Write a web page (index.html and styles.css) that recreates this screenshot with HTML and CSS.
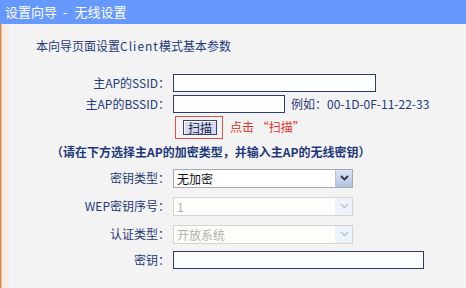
FILE: index.html
```html
<!DOCTYPE html>
<html lang="zh">
<head>
<meta charset="utf-8">
<link rel="stylesheet" href="styles.css">
</head>
<body>
<div class="title">设置向导<span class="dash">-</span>无线设置</div>
<div class="panel">
  <p class="intro">本向导页面设置<span class="latin">Client</span>模式基本参数</p>
  <div class="form">
    <div class="label">主AP的SSID：</div>
    <div class="field"><input class="text wide" type="text"></div>

    <div class="label">主AP的BSSID：</div>
    <div class="field"><input class="text mid" type="text"><span class="hint">例如：00-1D-0F-11-22-33</span></div>

    <div class="label"></div>
    <div class="field">
      <div class="scanbox"><button class="btn" type="button">扫描</button></div>
      <span class="red">点击 “扫描”</span>
    </div>

    <div class="note">（请在下方选择主AP的加密类型，并输入主AP的无线密钥）</div>

    <div class="label">密钥类型：</div>
    <div class="field">
      <div class="select"><span class="val">无加密</span><span class="arrow"><svg width="9" height="6" viewBox="0 0 9 6"><path d="M1 1 L4.5 4.5 L8 1" fill="none" stroke="#2c3550" stroke-width="1.8"/></svg></span></div>
    </div>

    <div class="label">WEP密钥序号：</div>
    <div class="field">
      <div class="select disabled"><span class="val">1</span><span class="arrow"><svg width="9" height="6" viewBox="0 0 9 6"><path d="M1 1 L4.5 4.5 L8 1" fill="none" stroke="#b9c6d8" stroke-width="1.6"/></svg></span></div>
    </div>

    <div class="label">认证类型：</div>
    <div class="field">
      <div class="select disabled"><span class="val">开放系统</span><span class="arrow"><svg width="9" height="6" viewBox="0 0 9 6"><path d="M1 1 L4.5 4.5 L8 1" fill="none" stroke="#b9c6d8" stroke-width="1.6"/></svg></span></div>
    </div>

    <div class="label">密钥：</div>
    <div class="field"><input class="text long" type="text"></div>
  </div>
</div>
</body>
</html>
```

FILE: styles.css
```css
html, body {
  margin: 0;
  padding: 0;
  background: #f3f3f3;
  font-family: "Noto Sans CJK SC", "Noto Sans", sans-serif;
  font-size: 12px;
  color: #1f3a7a;
  width: 466px;
  height: 288px;
  overflow: hidden;
}

.title {
  height: 24px;
  line-height: 24px;
  background: #6699ff;
  color: #ffffff;
  font-size: 13px;
  padding-left: 5px;
  white-space: pre;
}

.title .dash {
  margin: 0 7px 0 6px;
}

.panel {
  height: 264px;
  background: linear-gradient(to right, #d48640 0, #d48640 1px, #f3c398 1px, #f3c398 2px, #f7ebe3 2px, #f7ebe3 9px, #eef4f7 9px, #eef4f7 12px, #f3f3f3 12px);
  overflow: hidden;
}

.intro {
  margin: 0;
  padding: 14px 0 0 36px;
  line-height: 16px;
  height: 16px;
}

.intro .latin {
  letter-spacing: 1px;
}

.form {
  margin-top: 18px;
  display: grid;
  grid-template-columns: 170px 1fr;
  column-gap: 3px;
  grid-template-rows: 21px 22px 24px 25px 28px 28px 28px 24px;
  align-items: center;
}

.label {
  text-align: right;
  white-space: nowrap;
  line-height: 16px;
}

.field {
  display: flex;
  align-items: center;
  gap: 6px;
}

.text {
  box-sizing: border-box;
  height: 18px;
  margin: 0;
  padding: 0 2px;
  border: 1px solid #2d3c68;
  background: #fcfdff;
  font: inherit;
}

.wide { width: 203px; }
.mid { width: 112px; }
.long { width: 251px; }

.hint {
  white-space: nowrap;
  line-height: 16px;
}

.scanbox {
  box-sizing: border-box;
  width: 48px;
  height: 23px;
  margin-left: 2px;
  border: 1px solid #e0504c;
  display: flex;
  align-items: center;
  padding-left: 7px;
}

.btn {
  box-sizing: border-box;
  height: 15px;
  width: 34px;
  margin: 0;
  padding: 0;
  border: 1px solid #3b4566;
  background: #d7dbef;
  box-shadow: inset 1px 1px 0 #ffffff;
  font: inherit;
  line-height: 13px;
  color: #1a2550;
}

.red {
  color: #e5302c;
  white-space: nowrap;
  line-height: 16px;
  margin-left: 1px;
}

.note {
  grid-column: 1 / 3;
  padding-left: 51px;
  font-weight: bold;
  white-space: nowrap;
  line-height: 16px;
}

.select {
  box-sizing: border-box;
  width: 180px;
  height: 19px;
  border: 1px solid #a6acb6;
  background: #ffffff;
  display: flex;
  align-items: stretch;
  color: #111111;
}

.select .val {
  flex: 1;
  padding-left: 3px;
  line-height: 17px;
}

.select .arrow {
  width: 16px;
  margin: 0;
  border-left: 1px solid #b8c4da;
  background: linear-gradient(#dbe4f4, #b5c3e0);
  display: flex;
  align-items: center;
  justify-content: center;
}

.select.disabled {
  border-color: #d6d3cb;
  background: #fdfdf9;
  color: #b0b0b0;
}

.select.disabled .arrow {
  border-left: 1px solid #eef2f8;
  background: #eef3fb;
}
```
